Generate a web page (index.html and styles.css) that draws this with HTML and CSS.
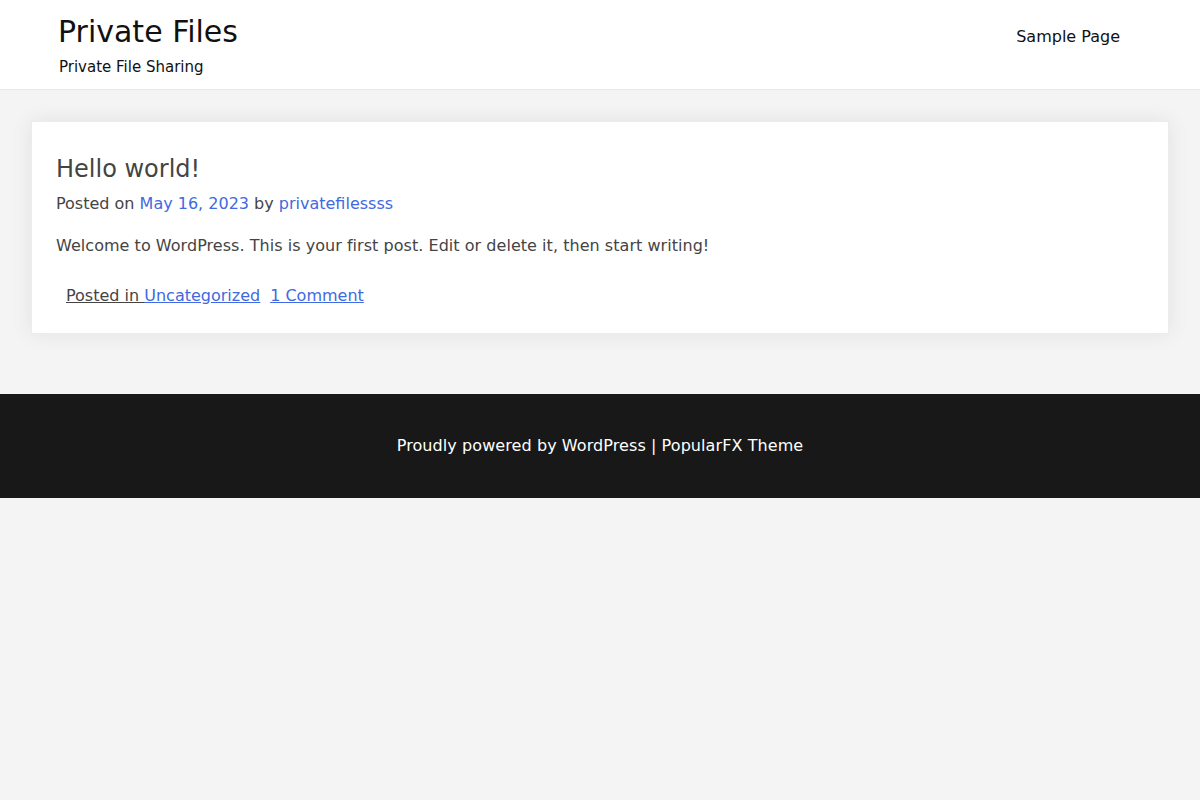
FILE: index.html
```html
<!DOCTYPE html>
<html lang="en">
<head>
<meta charset="utf-8">
<title>Private Files</title>
<link rel="stylesheet" href="styles.css">
</head>
<body>
<header class="site-header">
  <div class="branding">
    <div class="site-title">Private Files</div>
    <div class="site-desc">Private File Sharing</div>
  </div>
  <nav class="menu"><a href="#">Sample Page</a></nav>
</header>
<main class="content">
  <article class="post">
    <h2 class="post-title">Hello world!</h2>
    <div class="post-meta">Posted on <a href="#">May 16, 2023</a> by <a href="#">privatefilessss</a></div>
    <p class="post-body">Welcome to WordPress. This is your first post. Edit or delete it, then start writing!</p>
    <div class="post-footer"><span class="cat">Posted in <a href="#">Uncategorized</a></span><a href="#" class="comments">1 Comment</a></div>
  </article>
</main>
<footer class="site-footer">Proudly powered by WordPress | PopularFX Theme</footer>
</body>
</html>
```
FILE: styles.css
```css
html, body {
  margin: 0;
  padding: 0;
}
body {
  background: #f4f4f4;
  font-family: "DejaVu Sans", sans-serif;
  font-size: 16px;
  color: #444;
}
a {
  color: #4169e1;
  text-decoration: none;
}
.site-header {
  background: #fff;
  border-bottom: 1px solid #e8e8e8;
  height: 90px;
  box-sizing: border-box;
  display: flex;
  justify-content: space-between;
  align-items: flex-start;
  padding: 0 80px 0 58px;
}
.site-title {
  font-size: 30px;
  color: #111;
  line-height: 36px;
  margin-top: 14px;
}
.site-desc {
  font-size: 15px;
  color: #111;
  margin-top: 6px;
  line-height: 22px;
  padding-left: 1px;
}
.menu {
  margin-top: 26px;
}
.menu a {
  color: #111;
  font-size: 16px;
  line-height: 22px;
}
.content {
  padding: 31px 31px 60px 31px;
}
.post {
  background: #fff;
  border: 1px solid #ececec;
  box-shadow: 0 0 20px rgba(0, 0, 0, 0.08);
  padding: 26px 24px 25px 24px;
}
.post-title {
  margin: 0;
  font-weight: normal;
  font-size: 24px;
  line-height: 42px;
  color: #444;
}
.post-meta {
  line-height: 24px;
  margin-top: 2px;
}
.post-body {
  margin: 18px 0 0 0;
  line-height: 24px;
  letter-spacing: 0.04px;
}
.post-footer {
  margin-top: 26px;
  padding-left: 10px;
  line-height: 24px;
}
.post-footer .cat {
  text-decoration: underline;
  margin-right: 10px;
}
.post-footer a {
  text-decoration: underline;
}
.site-footer {
  background: #181818;
  color: #fff;
  text-align: center;
  height: 104px;
  line-height: 104px;
  font-size: 16px;
  letter-spacing: 0.08px;
}
```
